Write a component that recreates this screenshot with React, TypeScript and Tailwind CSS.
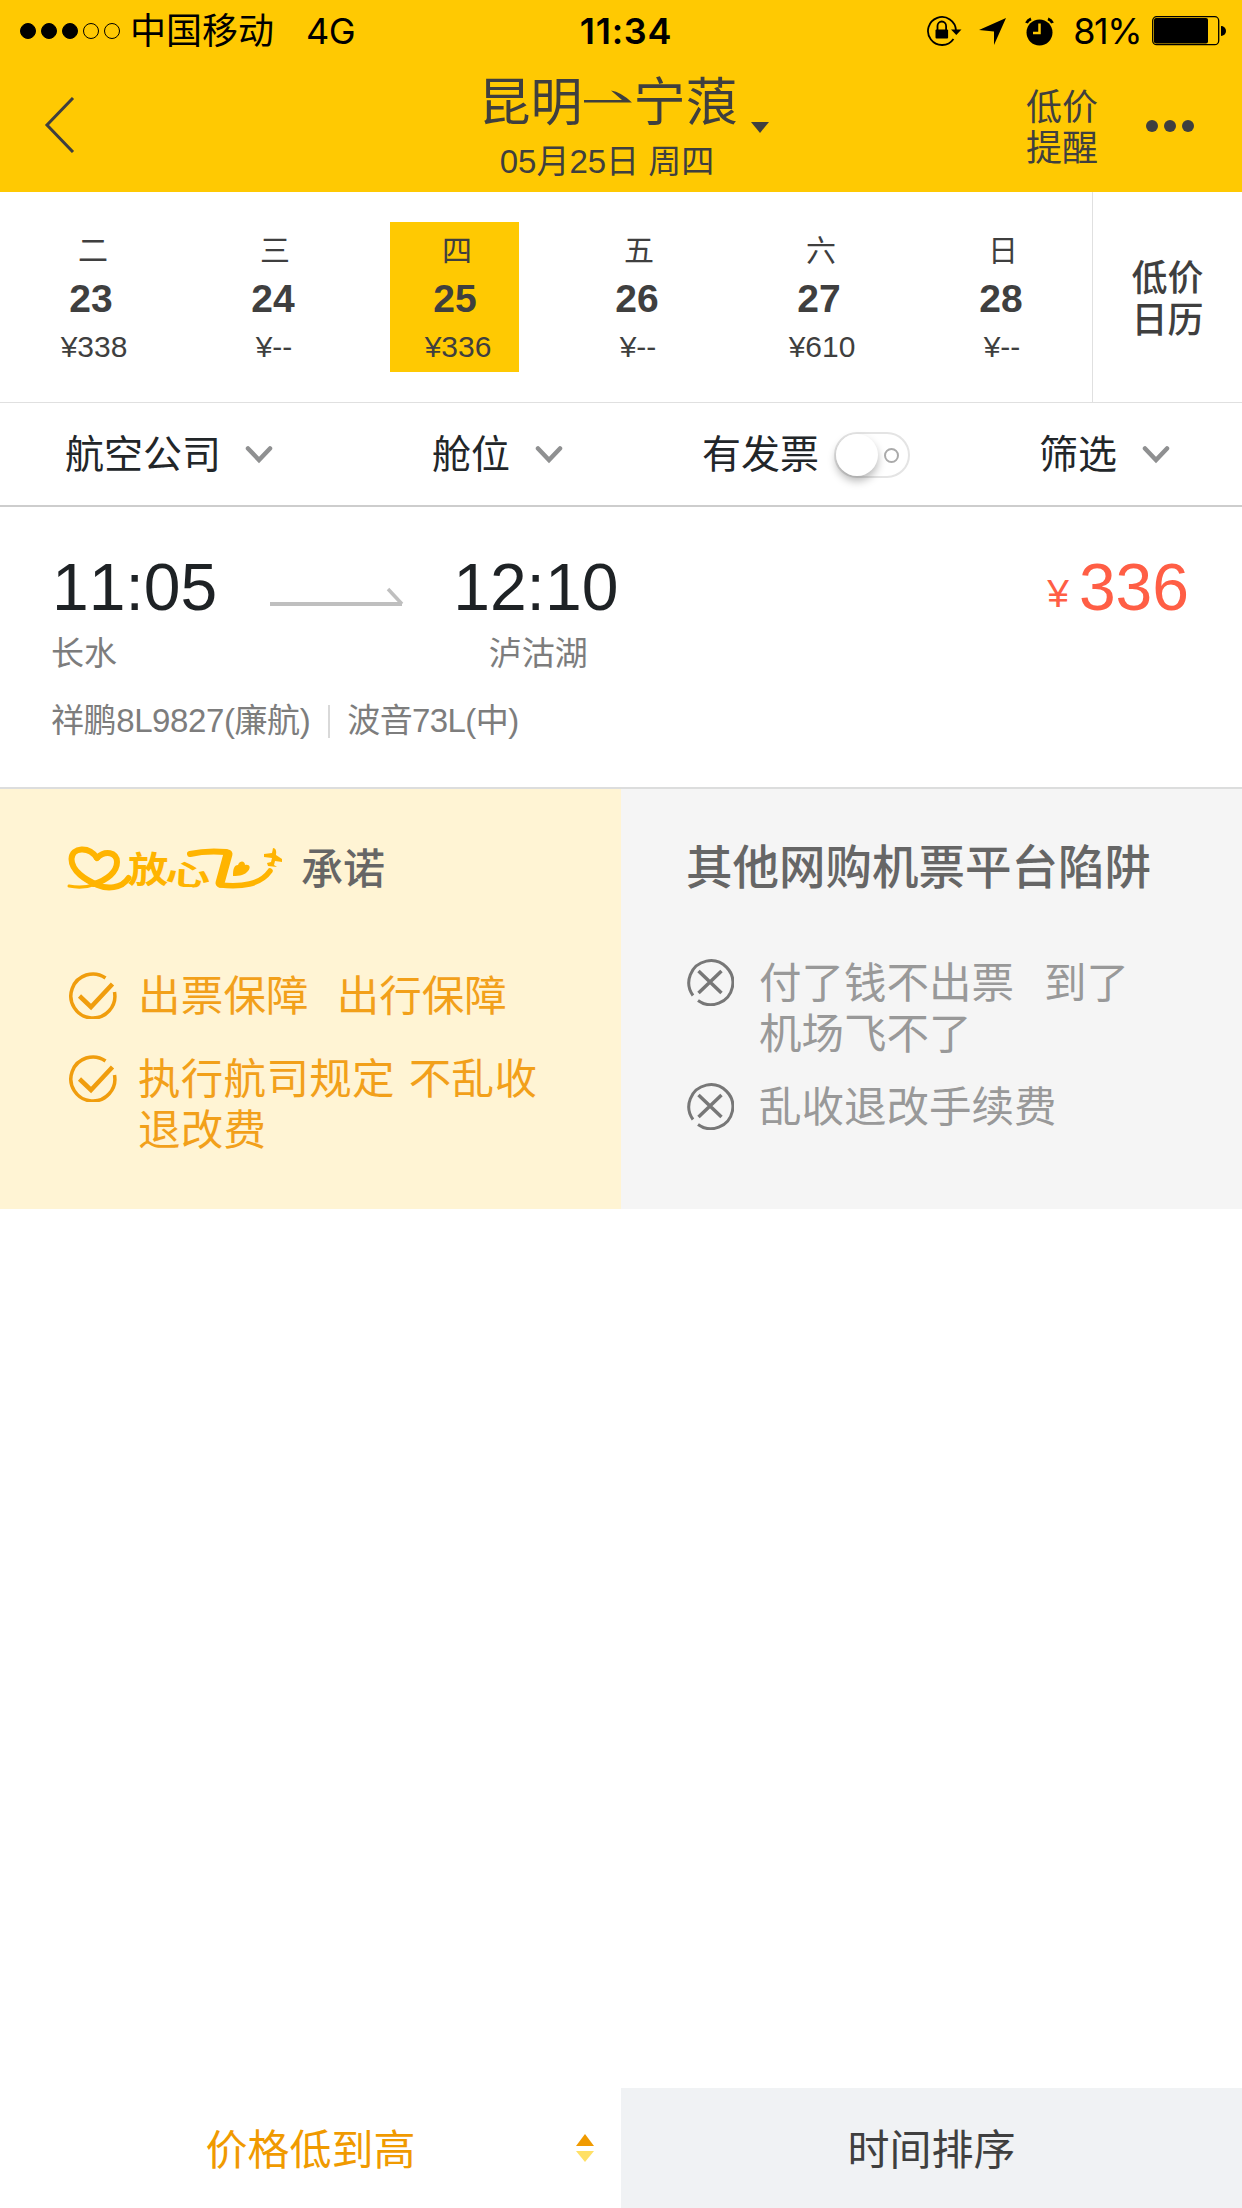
import type { ReactNode } from "react";

const days = [
  { week: "二", day: 23, price: "338" },
  { week: "三", day: 24, price: "--" },
  { week: "四", day: 25, price: "336", active: true },
  { week: "五", day: 26, price: "--" },
  { week: "六", day: 27, price: "610" },
  { week: "日", day: 28, price: "--" },
];

function StatusBar() {
  return (
    <div className="relative flex h-[62px] items-center justify-between pl-5 pr-[16px] text-[36px] leading-none text-black">
      <div className="flex items-center">
        <div className="flex gap-[5px]">
          {[0, 1, 2, 3, 4].map((i) => (
            <span key={i} className={`size-4 rounded-full border border-black ${i < 3 ? "bg-black" : ""}`} />
          ))}
        </div>
        <span className="ml-[10px] pt-[2px]">中国移动</span>
        <span className="ml-[32px] font-['Inter','Liberation_Sans',sans-serif] tracking-[-0.5px]">4G</span>
      </div>
      <span className="absolute left-1/2 top-[13px] ml-[5px] -translate-x-1/2 font-['Inter',sans-serif] text-[36px] font-semibold tracking-[0.7px]">11:34</span>
      <div className="flex items-center">
        <svg width="36" height="32" viewBox="0 0 36 32" fill="none">
          <path d="M27.500 24A14 14 0 1 1 30 15.500" stroke="#000" strokeWidth="1.8" />
          <path d="M25 14.500h10.500l-5.200 5.500z" fill="#000" />
          <path d="M11.500 15v-4a4.300 4.500 0 0 1 8.600 0V15" stroke="#000" strokeWidth="1.8" />
          <rect x="9.500" y="14.500" width="12.600" height="9" rx="1" fill="#000" />
        </svg>
        <svg className="ml-[17px]" width="27" height="27" viewBox="0 0 27 27">
          <path d="M27 0 15 27V13.500L0 12z" />
        </svg>
        <svg className="ml-[19px]" width="29" height="29" viewBox="0 0 29 29">
          <circle cx="14.500" cy="15.500" r="13" />
          <path d="M1.500 6A8 8 0 0 1 6 1.800M27.500 6A8 8 0 0 0 23 1.800" stroke="#000" strokeWidth="3" />
          <path d="M14.500 6.500v9.500H8" fill="none" stroke="#ffc902" strokeWidth="2.500" />
        </svg>
        <span className="ml-[19px] font-['Inter',sans-serif] text-[36px] tracking-[-1.5px]">81%</span>
        <svg className="ml-[11px]" width="74" height="30" viewBox="0 0 74 30">
          <rect x="0.700" y="0.700" width="66" height="28" rx="4" fill="none" stroke="#000" strokeWidth="1.300" />
          <rect x="2" y="2" width="54" height="25.500" rx="2" />
          <path d="M69 10a5 5 0 0 1 0 10z" />
        </svg>
      </div>
    </div>
  );
}

function NavBar() {
  return (
    <div className="flex h-[130px] text-[#3f3f3f]">
      <div className="flex w-[300px] pl-[44px] pt-[35px]">
        <svg width="32" height="56" viewBox="0 0 32 56" fill="none" stroke="#3f3f3f" strokeWidth="3">
          <path d="M29 1 3 28l26 27" />
        </svg>
      </div>
      <div className="flex flex-1 flex-col items-center pr-[36px] pt-[14px]">
        <div className="relative ml-[10px] flex h-[55px] items-center text-[52px] leading-[55px]">
          <span>昆明</span>
          <svg width="51" height="55" viewBox="0 0 51 55">
            <path d="M1 24h38L28 14.500q10 1.500 21 12H1z" fill="#3f3f3f" />
          </svg>
          <span>宁蒗</span>
          <svg className="absolute -right-[31px] bottom-[-3px]" width="18" height="12" viewBox="0 0 18 12">
            <path d="M0 0h18l-9 11z" fill="#3f3f3f" />
          </svg>
        </div>
        <div className="ml-[8px] mt-[9px] text-[33px] leading-[44px]">05月25日 周四</div>
      </div>
      <div className="flex w-[300px]">
        <div className="ml-[84px] w-[73px] pt-[25px] text-[36px] leading-[41px]">
          <div>低价</div>
          <div>提醒</div>
        </div>
        <div className="ml-[47px] flex gap-[6px] pt-[58px]">
          <span className="size-3 rounded-full bg-[#3f3f3f]" />
          <span className="size-3 rounded-full bg-[#3f3f3f]" />
          <span className="size-3 rounded-full bg-[#3f3f3f]" />
        </div>
      </div>
    </div>
  );
}

function DateStrip() {
  return (
    <div className="flex h-[211px] border-b border-[#e0e0e0] text-[#3f3f3f]">
      <div className="grid w-[1093px] grid-cols-6 border-r border-[#e0e0e0] pt-[30px]">
        {days.map((d) => (
          <div
            key={d.day}
            className={`ml-[26px] flex h-[150px] w-[129px] flex-col items-center text-[30px] ${d.active ? "bg-[#ffc902]" : ""}`}
          >
            <div className="ml-[5px] mt-[11px] leading-[36px]">{d.week}</div>
            <div className="ml-[1px] mt-[8px] text-[39px] font-bold leading-[44px]">{d.day}</div>
            <div className={`mt-[9px] leading-[34px] ${d.price === "--" ? "ml-[3px]" : "ml-[7px]"}`}>¥{d.price}</div>
          </div>
        ))}
      </div>
      <div className="flex flex-1 flex-col items-center justify-center pt-[5px] text-[36px] font-medium leading-[42px]">
        <div>低价</div>
        <div>日历</div>
      </div>
    </div>
  );
}

function Chevron() {
  return (
    <svg width="28" height="18" viewBox="0 0 28 18" fill="none" stroke="#8f9091" strokeWidth="4.500">
      <path d="M3 2.500 14 14 25 2.500" strokeLinecap="round" />
    </svg>
  );
}

function FilterBar() {
  return (
    <div className="flex h-[104px] items-center border-b-2 border-[#cdcdcd] pt-[2px] text-[39px] leading-[50px] text-[#222629]">
      <div className="flex w-[367px] items-center gap-[24px] pl-[65px]">
        航空公司
        <Chevron />
      </div>
      <div className="flex w-[270px] items-center gap-[25px] pl-[65px]">
        舱位
        <Chevron />
      </div>
      <div className="flex w-[402px] items-center gap-[15px] pl-[65px]">
        有发票
        <div className="flex h-[46px] w-[76px] items-center justify-between rounded-full border-2 border-[#e4e4e4] pr-[9px]">
          <span className="size-[42px] rounded-full bg-white shadow-[0_5px_9px_rgba(0,0,0,0.28)]" />
          <span className="size-[15px] rounded-full border-2 border-[#aaa]" />
        </div>
      </div>
      <div className="flex items-center gap-[25px]">
        筛选
        <Chevron />
      </div>
    </div>
  );
}

function FlightCard() {
  return (
    <div className="flex h-[282px] justify-between border-b-2 border-[#dcdddd] pl-[52px] pr-[53px] pt-[42px] text-[33px] text-[#7d7d7d]">
      <div>
        <div className="flex">
          <div>
            <div className="text-[66px] leading-[76px] text-[#1e2225] [font-kerning:none]">11:05</div>
            <div className="-ml-[1px] mt-[7px] leading-[44px]">长水</div>
          </div>
          <svg className="ml-[53px] mt-[36px]" width="134" height="22" viewBox="0 0 134 22" fill="none" stroke="#bfbfbf">
            <path d="M0 19h132" strokeWidth="4" />
            <path d="m118 4 14 15" strokeWidth="3.500" />
          </svg>
          <div className="ml-[49px]">
            <div className="text-[66px] leading-[76px] text-[#1e2225] [font-kerning:none]">12:10</div>
            <div className="mt-[7px] pl-[5px] text-center leading-[44px]">泸沽湖</div>
          </div>
        </div>
        <div className="mt-[22px] flex items-center leading-[46px]">
          <span className="-ml-[1px] tracking-[-0.4px]">祥鹏8L9827(廉航)</span>
          <span className="ml-[18px] mr-[17px] h-[33px] w-[2px] bg-[#d9d9d9]" />
          <span className="tracking-[-0.6px]">波音73L(中)</span>
        </div>
      </div>
      <div className="flex items-baseline self-start text-[#ff5e45]">
        <span className="-translate-y-[3px] text-[39px]">¥</span>
        <span className="ml-[10px] text-[66px] leading-[76px]">336</span>
      </div>
    </div>
  );
}

function BrandLogo() {
  return (
    <svg width="218" height="48" viewBox="0 0 218 48" fill="none" stroke="#ffb400" strokeLinecap="round">
      {/* heart with the ribbon crossing under it */}
      <path d="M31 12C23 0 6 1 5.500 13c0 12 14 21 26 26 9 4 24 4 31-7" strokeWidth="6" />
      <path d="M31 12c8-8 20-6 20 4 0 10-10 18-23 22" strokeWidth="6" />
      <path d="M3 40q14 3 27-2" strokeWidth="3" />
      <text transform="translate(62 37) scale(1.12 1)" fontSize="36" fontWeight="700" fill="#ffb400" stroke="none">放</text>
      <text transform="translate(99 38) rotate(3) scale(1.45 .9)" fontSize="31" fontWeight="700" fill="#ffb400" stroke="none">心</text>
      {/* ribbon trailing behind the plane */}
      <path d="M124 8c13-3 25-3 36-2" strokeWidth="6" />
      <path d="m162 8-8 29" strokeWidth="9" />
      <path d="M154 39c22 2 40 0 50-14" strokeWidth="5.500" />
      <path d="M167 30c0-7 1-11 5-11 2-5 7-4 7 0 5-1 6 3 3 6-3 4-8 5-15 5z" fill="#ffb400" stroke="none" />
      <path d="M207 2q4 0 3 7l6 4v3l-7-1-1 4 3 2-9-1-1-3 4-1 1-4-8-1v-3l8-1z" fill="#ffb400" stroke="none" />
    </svg>
  );
}

function CheckIcon() {
  return (
    <svg className="shrink-0" width="48" height="48" viewBox="0 0 48 48" fill="none" stroke="#f09d0d" strokeWidth="3.500">
      <path d="M36.500 7A22 22 0 1 0 45.500 21" />
      <path d="m10.500 25 11.500 11L43.500 13" strokeWidth="4.500" />
    </svg>
  );
}

function CrossIcon() {
  return (
    <svg className="shrink-0" width="48" height="48" viewBox="0 0 48 48" fill="none" stroke="#777" strokeWidth="3">
      <path d="M7 37.500A22 22 0 1 1 12 42.500" />
      <path d="m12.500 13 23 22M35.500 13l-23 22" strokeWidth="3.500" />
    </svg>
  );
}

function PromiseItem({ icon, children }: { icon: ReactNode; children: ReactNode }) {
  return (
    <div className="flex items-start">
      {icon}
      <div className="whitespace-pre text-[42.5px] leading-[51px]">{children}</div>
    </div>
  );
}

function PromisePanel() {
  return (
    <div className="grid h-[420px] grid-cols-2">
      <div className="bg-[#fff4d4] pl-[69px] pt-[56px] text-[#f2a01a]">
        <div className="-ml-[3px] flex h-[50px] items-center">
          <BrandLogo />
          <span className="ml-[17px] text-[42px] font-medium leading-[50px] text-[#666]">承诺</span>
        </div>
        <div className="mt-[76px]">
          <PromiseItem icon={<CheckIcon />}>
            <span className="ml-[21px] tracking-[0.2px]">出票保障</span>
            <span className="ml-[28px]">出行保障</span>
          </PromiseItem>
        </div>
        <div className="mt-[32px]">
          <PromiseItem icon={<CheckIcon />}>
            <span className="ml-[21px] tracking-[0.3px]">执行航司规定</span>
            <span className="ml-[14px] tracking-[0.3px]">不乱收</span>
            <br />
            <span className="ml-[21px] tracking-[0.3px]">退改费</span>
          </PromiseItem>
        </div>
      </div>
      <div className="bg-[#f5f5f5] pl-[65px] pt-[54px] text-[#999]">
        <div className="text-[46.5px] font-medium leading-[50px] text-[#666]">其他网购机票平台陷阱</div>
        <div className="mt-[65px]">
          <PromiseItem icon={<CrossIcon />}>
            <span className="ml-[25px]">付了钱不出票</span>
            <span className="ml-[30px]">到了</span>
            <br />
            <span className="ml-[25px]">机场飞不了</span>
          </PromiseItem>
        </div>
        <div className="mt-[22px]">
          <PromiseItem icon={<CrossIcon />}>
            <span className="ml-[25px]">乱收退改手续费</span>
          </PromiseItem>
        </div>
      </div>
    </div>
  );
}

function SortBar() {
  return (
    <div className="mt-auto grid h-[120px] grid-cols-2 text-[42px] leading-[60px]">
      <div className="relative flex items-center justify-center bg-white pt-[5px] text-[#f09a00]">
        价格低到高
        <svg className="absolute right-[26px] top-[46px]" width="20" height="30" viewBox="0 0 20 30">
          <path d="M1 12h18L10 0z" fill="#f09a00" />
          <path d="M1 17h18l-9 11z" fill="#ffe066" />
        </svg>
      </div>
      <div className="flex items-center justify-center bg-[#f0f2f4] pt-[5px] text-[#3f3f3f]">时间排序</div>
    </div>
  );
}

export default function App() {
  return (
    <div className="flex h-[2208px] w-[1242px] flex-col overflow-hidden bg-white font-['Liberation_Sans','Noto_Sans_CJK_SC',sans-serif]">
      <header className="bg-[#ffc902]">
        <StatusBar />
        <NavBar />
      </header>
      <DateStrip />
      <FilterBar />
      <FlightCard />
      <PromisePanel />
      <SortBar />
    </div>
  );
}
